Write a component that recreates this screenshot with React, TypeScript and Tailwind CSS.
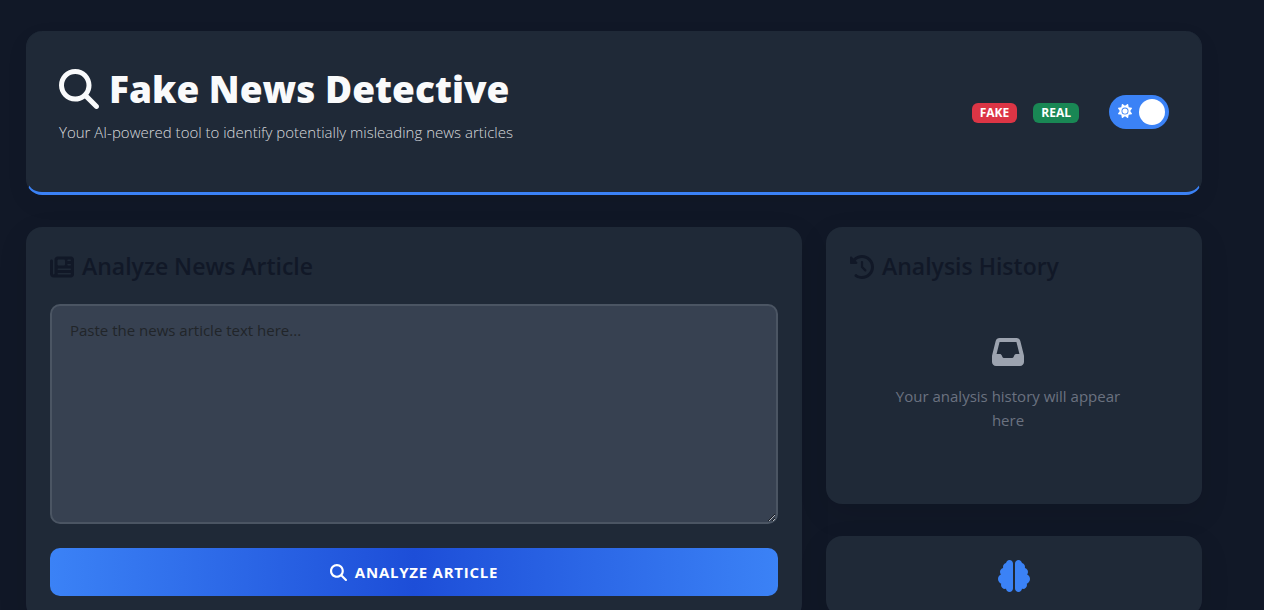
import { useState } from "react";
import type { ReactNode } from "react";
import {
  FaBrain,
  FaClockRotateLeft,
  FaInbox,
  FaMagnifyingGlass,
  FaNewspaper,
  FaSun,
} from "react-icons/fa6";

function Card({ children }: { children: ReactNode }) {
  return (
    <section className="rounded-2xl bg-[#1f2937] p-6 shadow-[0_10px_30px_rgba(0,0,0,0.1)]">
      {children}
    </section>
  );
}

function CardTitle({ icon, children }: { icon: ReactNode; children: ReactNode }) {
  return (
    <h2 className="mb-[22px] flex items-center gap-2 text-[23px] leading-[31px] font-semibold text-[#111827]">
      {icon}
      {children}
    </h2>
  );
}

function ThemeSwitch() {
  const [dark, setDark] = useState(true);
  return (
    <label className="relative block h-[34px] w-[60px] cursor-pointer">
      <input
        type="checkbox"
        aria-label="Dark mode"
        checked={dark}
        onChange={(e) => setDark(e.target.checked)}
        className="peer block h-full w-full cursor-pointer appearance-none rounded-full bg-slate-300 checked:bg-[#3b82f6]"
      />
      <FaSun className="pointer-events-none absolute top-[9px] left-[9px] size-[14px] text-white" />
      <span className="pointer-events-none absolute top-1 left-1 size-[26px] rounded-full bg-white transition-transform peer-checked:translate-x-[26px]" />
    </label>
  );
}

function Header() {
  return (
    <header className="flex items-center justify-between rounded-2xl border border-t-0 border-b-3 border-[#1f2937] border-b-[#3b82f6] bg-[#1f2937] px-8 py-8 shadow-[0_8px_24px_rgba(0,0,0,0.05)]">
      <div className="pb-4">
        <h1 className="mb-1.5 flex items-center gap-[10px] text-[37px] leading-[52px] font-extrabold text-gray-50">
          <FaMagnifyingGlass className="size-10" />
          Fake News Detective
        </h1>
        <p className="text-[15px] leading-[23px] font-light text-gray-50/85">
          Your AI-powered tool to identify potentially misleading news articles
        </p>
      </div>
      <div className="flex items-center gap-[30px]">
        <div className="mt-0.5 flex gap-4 text-[12px] leading-5 font-bold text-white">
          <span className="rounded-md bg-[#dc3545] px-2">FAKE</span>
          <span className="rounded-md bg-[#198754] px-2">REAL</span>
        </div>
        <ThemeSwitch />
      </div>
    </header>
  );
}

export default function App() {
  const [text, setText] = useState("");
  return (
    <div className="min-h-screen bg-[#111827] pt-[31px] pr-[62px] pl-[26px] font-['Open_Sans','Noto_Sans',sans-serif]">
      <Header />
      <main className="mt-8 grid grid-cols-12 items-start gap-6">
        <div className="col-span-8">
          <Card>
            <CardTitle icon={<FaNewspaper className="size-6" />}>Analyze News Article</CardTitle>
            <textarea
              aria-label="News article text"
              placeholder="Paste the news article text here..."
              value={text}
              onChange={(e) => setText(e.target.value)}
              className="block h-[220px] w-full resize-y rounded-[10px] border-2 border-[#4b5563] bg-[#374151] px-[18px] py-3 text-[15px] leading-6 text-gray-50 placeholder:text-[#212529]"
            />
            <button
              type="button"
              className="mt-6 flex h-12 w-full items-center justify-center gap-2 rounded-[10px] bg-linear-to-r/srgb from-[#3b82f6] via-[#1d4ed8] to-[#3b82f6] text-[15px] font-bold tracking-wider text-white"
            >
              <FaMagnifyingGlass className="size-[17px]" />
              ANALYZE ARTICLE
            </button>
          </Card>
        </div>
        <div className="col-span-4 flex flex-col gap-8">
          <Card>
            <CardTitle icon={<FaClockRotateLeft className="size-6" />}>Analysis History</CardTitle>
            <div className="flex flex-col items-center gap-4 pt-8 pr-12 pb-12 pl-9 text-center">
              <FaInbox className="size-8 text-[#9ca3af]" />
              <p className="text-[15px] leading-6 text-[#6b7280]">
                Your analysis history will appear here
              </p>
            </div>
          </Card>
          <Card>
            <FaBrain className="mx-auto size-8 text-[#3b82f6]" />
          </Card>
        </div>
      </main>
    </div>
  );
}
